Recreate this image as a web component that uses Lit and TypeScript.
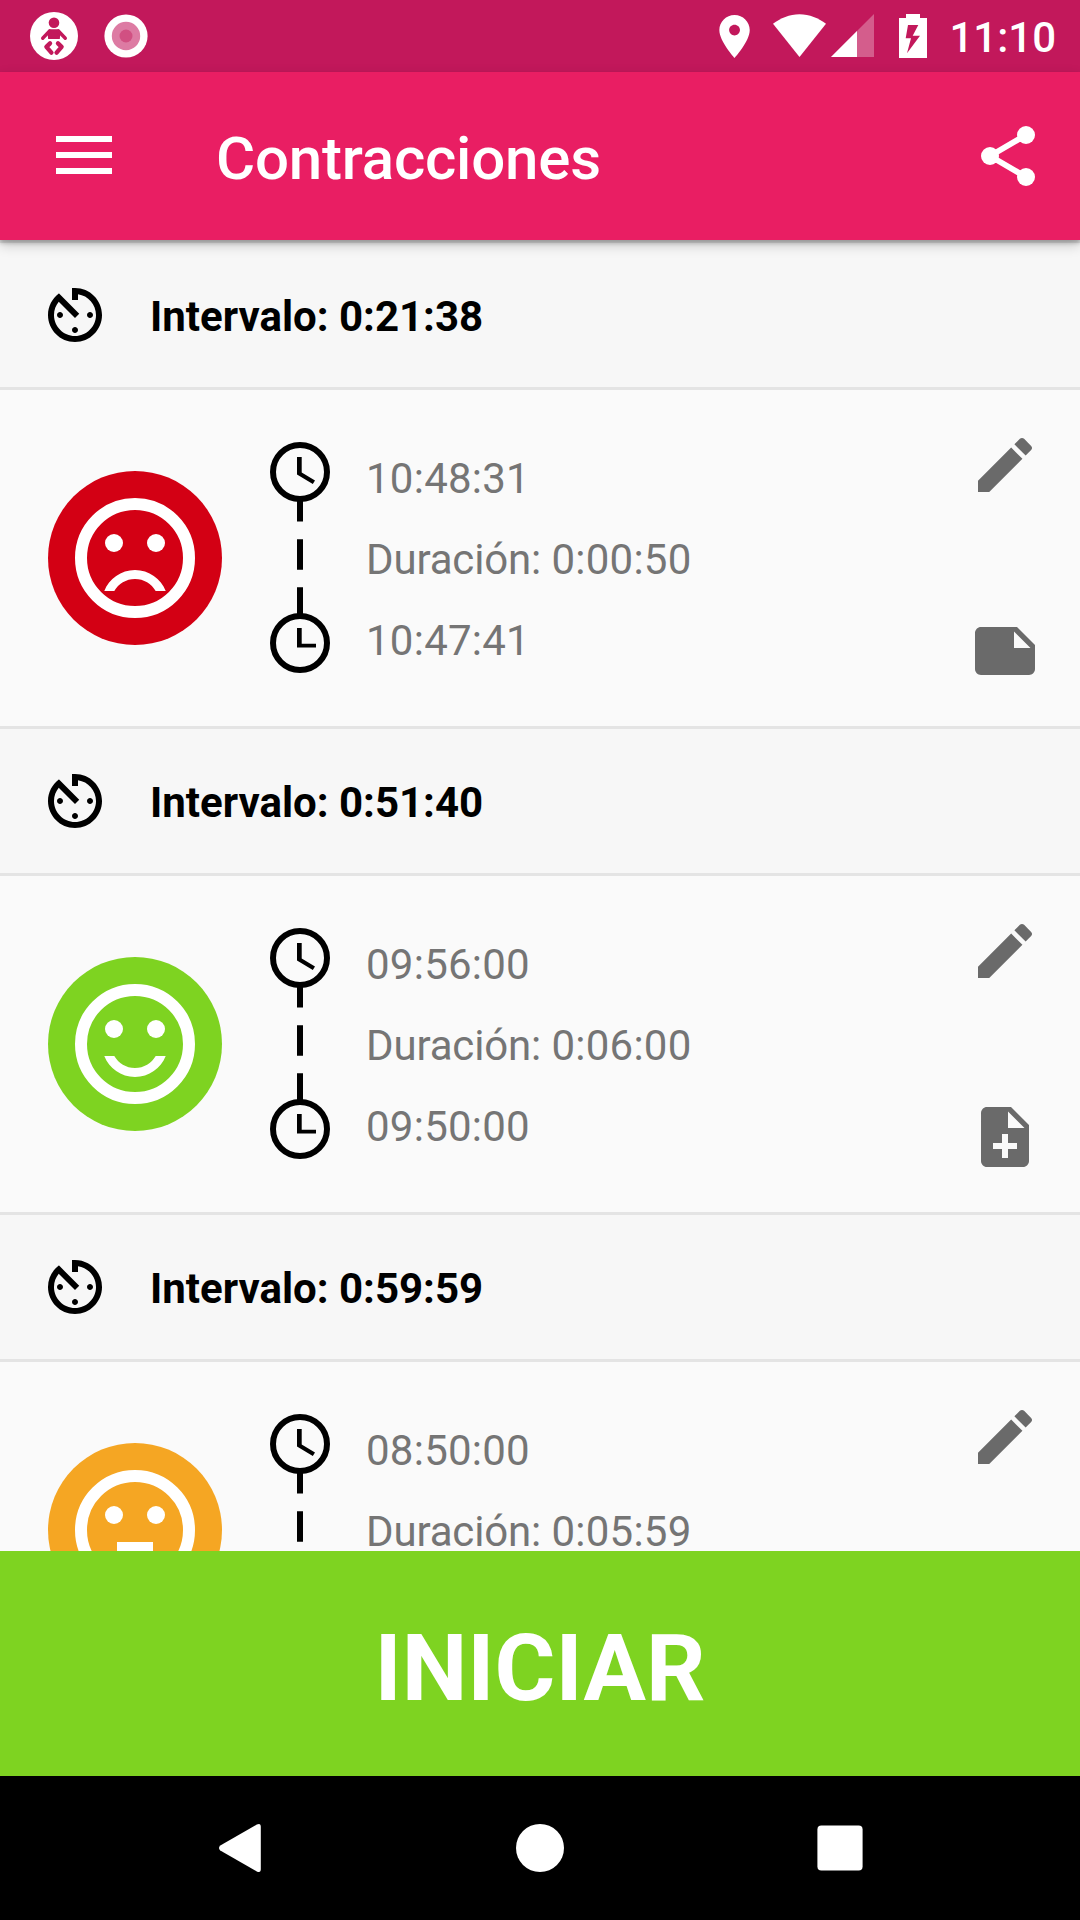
import { LitElement, html, css, svg } from "lit";
import { customElement, property } from "lit/decorators.js";
import { classMap } from "lit/directives/class-map.js";

type Mood = "sad" | "happy" | "neutral";

interface Contraction {
  interval: string;
  mood: Mood;
  end: string;
  duration: string;
  start?: string;
  hasNote: boolean;
}

const CONTRACTIONS: Contraction[] = [
  { interval: "0:21:38", mood: "sad", end: "10:48:31", duration: "0:00:50", start: "10:47:41", hasNote: true },
  { interval: "0:51:40", mood: "happy", end: "09:56:00", duration: "0:06:00", start: "09:50:00", hasNote: false },
  { interval: "0:59:59", mood: "neutral", end: "08:50:00", duration: "0:05:59", hasNote: false },
];

const MOUTHS = {
  sad: "M12 14c-2.33 0-4.32 1.45-5.12 3.5h1.67c.69-1.19 1.97-2 3.45-2s2.75.81 3.45 2h1.67c-.8-2.05-2.79-3.5-5.12-3.5z",
  happy: "M12 16c-1.48 0-2.75-.81-3.45-2H6.88c.8 2.05 2.79 3.5 5.12 3.5s4.32-1.45 5.12-3.5h-1.67c-.7 1.19-1.97 2-3.45 2z",
  neutral: "M9 14h6v1.5H9z",
};

const TIMER =
  "M11 17c0 .55.45 1 1 1s1-.45 1-1-.45-1-1-1-1 .45-1 1zm0-14v4h2V5.08c3.39.49 6 3.39 6 6.92 0 3.87-3.13 7-7 7s-7-3.13-7-7c0-1.68.59-3.22 1.58-4.42L12 13l1.41-1.41-6.8-6.8v.02C4.42 6.45 3 9.05 3 12c0 4.97 4.02 9 9 9 4.97 0 9-4.03 9-9s-4.03-9-9-9h-1zm7 9c0-.55-.45-1-1-1s-1 .45-1 1 .45 1 1 1 1-.45 1-1zM6 12c0 .55.45 1 1 1s1-.45 1-1-.45-1-1-1-1 .45-1 1z";
const EDIT =
  "M3 17.25V21h3.75L17.81 9.94l-3.75-3.75L3 17.25zM20.71 7.04c.39-.39.39-1.02 0-1.41l-2.34-2.34c-.39-.39-1.02-.39-1.41 0l-1.83 1.83 3.75 3.75 1.83-1.83z";
const NOTE =
  "M22 10l-6-6H4c-1.1 0-2 .9-2 2v12.01c0 1.1.9 1.99 2 1.99l16-.01c1.1 0 2-.89 2-1.99v-8zm-7-4.5l5.5 5.5H15V5.5z";
const NOTE_ADD =
  "M14 2H6c-1.1 0-1.99.9-1.99 2L4 20c0 1.1.89 2 1.99 2H18c1.1 0 2-.9 2-2V8l-6-6zm2 14h-3v3h-2v-3H8v-2h3v-3h2v3h3v2zm-3-7V3.5L18.5 9H13z";

const icon = (d: string) =>
  html`<svg width="72" height="72" viewBox="0 0 24 24" fill="currentColor"><path d=${d}></path></svg>`;

@customElement("status-bar")
export class StatusBar extends LitElement {
  static styles = css`
    :host {
      display: flex;
      justify-content: space-between;
      height: 72px;
      background: #c2185b;
      color: #fff;
      font-family: Roboto, sans-serif;
    }
    svg { display: block; }
    .side { display: flex; }
    .clock {
      width: 107px;
      font-size: 42px;
      font-weight: 500;
      line-height: 72px;
      padding: 2px 24px 0 0;
      height: 70px;
      text-align: right;
    }
  `;
  render() {
    return html`
      <svg width="160" height="72" viewBox="0 0 160 72">
        <circle cx="54" cy="36" r="24" fill="#fff"></circle>
        <g fill="#c2185b">
          <circle cx="54" cy="22.7" r="5.3"></circle>
          <path d="M49 29.200h10L60.600 32 59.800 39H48.200l-.8-7z"></path>
        </g>
        <g fill="none" stroke="#c2185b" stroke-linecap="round" stroke-linejoin="round">
          <path d="M49.600 31L42.700 38.200M58.400 31L65.300 38.200" stroke-width="3.400"></path>
          <path d="M50 43.400L46.400 46.900 51.400 52.600" stroke-width="4.400"></path>
          <path d="M58 43.400L61.600 46.900 56.600 52.600" stroke-width="4.400"></path>
        </g>
        <circle cx="126" cy="36" r="21.6" fill="#fff"></circle>
        <circle cx="126" cy="36" r="14.2" fill="#dd7ba3"></circle>
        <circle cx="126" cy="36" r="6.5" fill="#d15082"></circle>
      </svg>
      <div class="side">
        <svg width="240" height="72" viewBox="709 0 240 72" fill="#fff">
          <path
            transform="translate(708.5 10.7) scale(2.17 2.15)"
            d="M12 2C8.13 2 5 5.13 5 9c0 5.25 7 13 7 13s7-7.75 7-13c0-3.87-3.13-7-7-7zm0 9.5c-1.38 0-2.5-1.12-2.5-2.5s1.12-2.5 2.5-2.5 2.5 1.12 2.5 2.5-1.12 2.5-2.5 2.5z"
          ></path>
          <path d="M799.5 57L773 23.800C780.500 18 789.500 14.200 799.500 14.200S818.500 18 826 23.800z"></path>
          <path d="M874 14V57H831z" fill-opacity=".3"></path>
          <path d="M857 31V57H831z"></path>
          <path
            fill-rule="evenodd"
            d="M906 14h14v4h7v40h-28V18h7zM908 25l-2.300 13.300h5.300L907 53.300 920 35.700h-7.300L918.300 25z"
          ></path>
        </svg>
        <span class="clock">11:10</span>
      </div>
    `;
  }
}

@customElement("app-bar")
export class AppBar extends LitElement {
  static styles = css`
    :host {
      display: flex;
      align-items: center;
      height: 168px;
      box-sizing: border-box;
      padding: 0 36px 0 48px;
      background: #e91e63;
      color: #fff;
      font-family: Roboto, sans-serif;
      box-shadow: 0 3px 4px rgba(0, 0, 0, 0.2), 0 5px 12px rgba(0, 0, 0, 0.2);
    }
    svg { display: block; }
    .title {
      flex: 1;
      margin: 0 0 0 96px;
      padding-top: 5px;
      font-size: 60px;
      font-weight: 500;
      line-height: 72px;
      letter-spacing: -0.2px;
    }
  `;
  render() {
    return html`
      <svg width="72" height="72" viewBox="0 0 72 72" fill="#fff">
        <path d="M8 16h56v6H8zM8 32h56v6H8zM8 48h56v6H8z"></path>
      </svg>
      <h1 class="title">Contracciones</h1>
      <svg width="72" height="72" viewBox="0 0 24 24" fill="#fff">
        <path d="M18 5L6 12l12 7" fill="none" stroke="#fff" stroke-width="1.9"></path>
        <circle cx="18" cy="5" r="3"></circle>
        <circle cx="6" cy="12" r="3"></circle>
        <circle cx="18" cy="19" r="3"></circle>
      </svg>
    `;
  }
}

@customElement("contraction-item")
export class ContractionItem extends LitElement {
  @property({ attribute: false }) item!: Contraction;

  static styles = css`
    :host {
      display: block;
      font-family: Roboto, sans-serif;
      font-size: 42px;
    }
    svg { display: block; }
    .interval {
      display: flex;
      align-items: center;
      gap: 39px;
      height: 144px;
      padding-left: 39px;
      background: #f7f7f7;
      border-bottom: 3px solid #e4e4e4;
      color: #000;
      font-weight: 700;
    }
    .label { padding-top: 3px; }
    .body {
      display: flex;
      align-items: center;
      box-sizing: border-box;
      height: 339px;
      padding: 0 39px 0 48px;
      background: #fafafa;
      border-bottom: 3px solid #e4e4e4;
    }
    .face.sad { color: #d30014; }
    .face.happy { color: #7ed321; }
    .face.neutral { color: #f5a623; }
    .line { margin-left: 48px; }
    .times {
      flex: 1;
      display: grid;
      grid-template-rows: repeat(3, 81px);
      margin-left: 36px;
      padding-top: 3px;
      color: #757575;
      line-height: 81px;
      letter-spacing: 0.25px;
    }
    .caption { letter-spacing: -0.15px; }
    .actions {
      display: flex;
      flex-direction: column;
      justify-content: space-between;
      height: 258px;
      color: #6a6a6a;
    }
  `;

  render() {
    const { interval, mood, end, duration, start, hasNote } = this.item;
    return html`
      <div class="interval">
        ${icon(TIMER)}
        <span class="label">Intervalo: ${interval}</span>
      </div>
      <div class="body">
        <svg class=${classMap({ face: true, [mood]: true })} width="174" height="174" viewBox="-2.5 -2.5 29 29">
          <circle cx="12" cy="12" r="14.5" fill="currentColor"></circle>
          <circle cx="12" cy="12" r="9" fill="none" stroke="#fff" stroke-width="2"></circle>
          <g fill="#fff">
            <circle cx="8.5" cy="9.5" r="1.5"></circle>
            <circle cx="15.5" cy="9.5" r="1.5"></circle>
            ${svg`<path d=${MOUTHS[mood]}></path>`}
          </g>
        </svg>
        <svg class="line" width="60" height="232" viewBox="270 442 60 232">
          <g fill="none" stroke="#000" stroke-width="6">
            <circle cx="300" cy="472" r="27"></circle>
            <circle cx="300" cy="643" r="27"></circle>
            <path d="M300 500V521.600M300 539.200V569.700M300 587.200V615"></path>
          </g>
          <path d="M297 457h4.700v15.600l13.300 7.900-2.200 3.500L297 474.600z"></path>
          <path d="M297 628h4.700v15.700H316v3.800H297z"></path>
        </svg>
        <div class="times">
          <div>${end}</div>
          <div><span class="caption">Duración: </span>${duration}</div>
          ${start ? html`<div>${start}</div>` : null}
        </div>
        <div class="actions">${icon(EDIT)} ${icon(hasNote ? NOTE : NOTE_ADD)}</div>
      </div>
    `;
  }
}

@customElement("nav-bar")
export class NavBar extends LitElement {
  static styles = css`
    :host {
      display: flex;
      justify-content: center;
      align-items: center;
      gap: 240px;
      height: 144px;
      background: #000;
    }
    svg { display: block; }
  `;
  render() {
    return html`
      <svg width="60" height="60" viewBox="0 0 60 60" fill="#fff">
        <path d="M10.300 27.600L46.800 6.600Q50.800 4.600 50.800 9V51Q50.800 55.400 46.800 53.400L10.300 32.400Q7.700 30 10.300 27.600z"></path>
      </svg>
      <svg width="60" height="60" viewBox="0 0 60 60" fill="#fff"><circle cx="30" cy="30" r="24"></circle></svg>
      <svg width="60" height="60" viewBox="0 0 60 60" fill="#fff">
        <rect x="7.400" y="7.400" width="45.200" height="45.200" rx="4"></rect>
      </svg>
    `;
  }
}

@customElement("app-root")
export class AppRoot extends LitElement {
  static styles = css`
    :host {
      display: flex;
      flex-direction: column;
      width: 1080px;
      height: 1920px;
      overflow: hidden;
      background: #fafafa;
      font-family: Roboto, sans-serif;
    }
    .bar { position: relative; z-index: 1; flex: none; }
    .list {
      flex: 1;
      min-height: 0;
      overflow: hidden;
      border-top: 3px solid #e4e4e4;
    }
    .start {
      flex: none;
      height: 225px;
      border: 0;
      padding: 10px 0 0;
      background: #7ed321;
      color: #fff;
      font: 700 93px Roboto, sans-serif;
      text-align: center;
    }
    .fixed { flex: none; }
  `;
  render() {
    return html`
      <status-bar class="fixed"></status-bar>
      <app-bar class="bar"></app-bar>
      <div class="list">
        ${CONTRACTIONS.map((c) => html`<contraction-item .item=${c}></contraction-item>`)}
      </div>
      <button class="start">INICIAR</button>
      <nav-bar class="fixed"></nav-bar>
    `;
  }
}
